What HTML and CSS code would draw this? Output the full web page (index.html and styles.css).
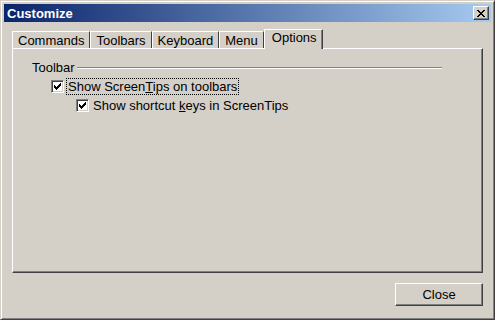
FILE: index.html
```html
<!DOCTYPE html>
<html>

<head>
  <meta charset="UTF-8" />
  <title>Customize</title>
  <link rel="stylesheet" href="styles.css">
</head>

<body>
  <div class="window">
    <div class="titlebar">
      <span class="title">Customize</span>
      <button class="title-close" aria-label="Close">
        <svg width="8" height="7" viewBox="0 0 8 7" shape-rendering="crispEdges">
          <path fill="#000" d="M0 0h2v1H0zM6 0h2v1H6zM1 1h2v1H1zM5 1h2v1H5zM2 2h4v1H2zM3 3h2v1H3zM2 4h4v1H2zM1 5h2v1H1zM5 5h2v1H5zM0 6h2v1H0zM6 6h2v1H6z" />
        </svg>
      </button>
    </div>

    <div class="tabs">
      <div class="tab">Commands</div>
      <div class="tab">Toolbars</div>
      <div class="tab">Keyboard</div>
      <div class="tab">Menu</div>
      <div class="tab active">Options</div>
    </div>

    <div class="panel">
      <div class="group">
        <span class="group-title">Toolbar</span>
        <span class="group-line"></span>
      </div>
      <div class="option">
        <span class="check">
          <svg width="7" height="7" viewBox="0 0 7 7" shape-rendering="crispEdges">
            <path fill="#000" d="M6 0h1v3H6zM5 1h1v3H5zM4 2h1v3H4zM0 2h1v3H0zM1 3h1v3H1zM3 3h1v3H3zM2 4h1v3H2z" />
          </svg>
        </span>
        <span class="option-label focused">Show Screen<u>T</u>ips on toolbars</span>
      </div>
      <div class="option sub">
        <span class="check">
          <svg width="7" height="7" viewBox="0 0 7 7" shape-rendering="crispEdges">
            <path fill="#000" d="M6 0h1v3H6zM5 1h1v3H5zM4 2h1v3H4zM0 2h1v3H0zM1 3h1v3H1zM3 3h1v3H3zM2 4h1v3H2z" />
          </svg>
        </span>
        <span class="option-label">Show shortcut <u>k</u>eys in ScreenTips</span>
      </div>
    </div>

    <div class="footer">
      <button class="btn">Close</button>
    </div>
  </div>
</body>

</html>
```

FILE: styles.css
```css
body {
  margin: 0;
  font-family: "Liberation Sans", Arial, sans-serif;
  font-size: 13px;
  color: #000;
}

.window {
  width: 495px;
  height: 320px;
  box-sizing: border-box;
  display: flex;
  flex-direction: column;
  background: #d4d0c8;
  border: 1px solid;
  border-color: #d4d0c8 #404040 #404040 #d4d0c8;
  box-shadow: inset 1px 1px #fff, inset -1px -1px #808080;
  padding: 3px;
}

.titlebar {
  height: 18px;
  display: flex;
  align-items: center;
  justify-content: space-between;
  background: linear-gradient(to right, #0a246a, #a6caf0);
}

.title {
  color: #fff;
  font-weight: bold;
  line-height: 15px;
  padding-left: 3px;
}

.title-close {
  width: 16px;
  height: 14px;
  margin-right: 2px;
  padding: 0;
  display: flex;
  align-items: center;
  justify-content: center;
  background: #d4d0c8;
  border: 1px solid;
  border-color: #fff #404040 #404040 #fff;
  box-shadow: inset -1px -1px #808080;
}

.title-close svg {
  display: block;
  margin-left: -1px;
}

.tabs {
  display: flex;
  align-items: flex-end;
  height: 19px;
  margin: 7px 0 0 8px;
}

.tab {
  line-height: 15px;
  padding: 1px 5px 0 5px;
  border-top: 1px solid #fff;
  border-left: 1px solid #fff;
  border-right: 1px solid #404040;
  background: #d4d0c8;
}

.tab.active {
  position: relative;
  z-index: 1;
  padding: 0 5px 4px 7px;
  margin-bottom: -1px;
  box-shadow: inset -1px 0 #808080;
}

.panel {
  height: 225px;
  box-sizing: border-box;
  margin: 0 8px;
  padding: 11px 40px 0 19px;
  border: 1px solid;
  border-color: #fff #404040 #404040 #fff;
  box-shadow: inset -1px -1px #808080;
}

.group {
  display: flex;
  align-items: center;
  line-height: 15px;
}

.group-line {
  flex: 1;
  height: 0;
  margin-left: 2px;
  margin-top: 1px;
  border-top: 1px solid #808080;
  border-bottom: 1px solid #fff;
}

.option {
  display: flex;
  align-items: center;
  margin: 3px 0 0 19px;
}

.option.sub {
  margin: 2px 0 0 44px;
}

.check {
  width: 13px;
  height: 13px;
  box-sizing: border-box;
  display: flex;
  align-items: center;
  justify-content: center;
  background: #fff;
  border: 1px solid;
  border-color: #808080 #fff #fff #808080;
  box-shadow: inset 1px 1px #404040, inset -1px -1px #d4d0c8;
}

.option-label {
  margin-left: 2px;
  padding: 0 1px;
  line-height: 15px;
  border: 1px solid transparent;
}

.option-label.focused {
  border: 1px dotted #000;
}

.footer {
  display: flex;
  justify-content: flex-end;
  margin: 10px 8px 0 0;
}

.btn {
  width: 88px;
  height: 23px;
  padding: 0;
  font-family: inherit;
  font-size: 13px;
  color: #000;
  background: #d4d0c8;
  border: 1px solid;
  border-color: #fff #404040 #404040 #fff;
  box-shadow: inset -1px -1px #808080;
}
```
